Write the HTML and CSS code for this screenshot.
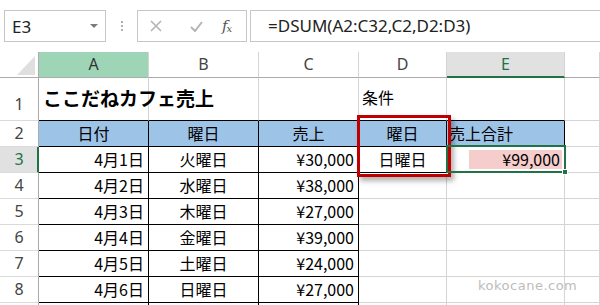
FILE: index.html
```html
<!DOCTYPE html>
<html lang="ja">
<head>
	<meta charset="UTF-8">
	<title>DSUM</title>
	<link rel="stylesheet" href="styles.css">
</head>
<body>
	<div class="bar">
		<div class="namebox">
			<span>E3</span>
			<span class="caret"></span>
		</div>
		<div class="dots"><i></i><i></i><i></i></div>
		<div class="fxbox">
			<svg width="12" height="12" viewBox="0 0 12 12"><path d="M1 1 L11 11 M11 1 L1 11" stroke="#b4b4b4" stroke-width="1.6" fill="none"/></svg>
			<svg width="13" height="11" viewBox="0 0 13 11"><path d="M1 6 L5 10 L12 1" stroke="#b4b4b4" stroke-width="2" fill="none"/></svg>
			<span class="fx">f<sub>x</sub></span>
		</div>
		<div class="formula">=DSUM(A2:C32,C2,D2:D3)</div>
	</div>

	<div class="sheet">
		<!-- 列見出し -->
		<div class="c corner"><span class="tri"></span></div>
		<div class="c h sel-a">A</div>
		<div class="c h">B</div>
		<div class="c h">C</div>
		<div class="c h">D</div>
		<div class="c h sel-e">E</div>
		<div class="c h"></div>

		<!-- 1行目 -->
		<div class="c rh rh1">1</div>
		<div class="c title bb">ここだねカフェ売上</div>
		<div class="c bb"></div>
		<div class="c bb"></div>
		<div class="c r1 bb">条件</div>
		<div class="c bb"></div>
		<div class="c"></div>

		<!-- 2行目 -->
		<div class="c rh">2</div>
		<div class="c blue bb br ctr">日付</div>
		<div class="c blue bb br ctr">曜日</div>
		<div class="c blue bb br ctr">売上</div>
		<div class="c blue bb br ctr">曜日</div>
		<div class="c blue bb br left">売上合計</div>
		<div class="c"></div>

		<!-- 3行目 -->
		<div class="c rh rh-sel">3</div>
		<div class="c bb br num">4月1日</div>
		<div class="c bb br ctr">火曜日</div>
		<div class="c bb br num">¥30,000</div>
		<div class="c bb br ctr">日曜日</div>
		<div class="c bb br num"><span class="pink">¥99,000</span></div>
		<div class="c"></div>

		<div class="c rh">4</div>
		<div class="c bb br num">4月2日</div>
		<div class="c bb br ctr">水曜日</div>
		<div class="c bb br num">¥38,000</div>
		<div class="c"></div><div class="c"></div><div class="c"></div>

		<div class="c rh">5</div>
		<div class="c bb br num">4月3日</div>
		<div class="c bb br ctr">木曜日</div>
		<div class="c bb br num">¥27,000</div>
		<div class="c"></div><div class="c"></div><div class="c"></div>

		<div class="c rh">6</div>
		<div class="c bb br num">4月4日</div>
		<div class="c bb br ctr">金曜日</div>
		<div class="c bb br num">¥39,000</div>
		<div class="c"></div><div class="c"></div><div class="c"></div>

		<div class="c rh">7</div>
		<div class="c bb br num">4月5日</div>
		<div class="c bb br ctr">土曜日</div>
		<div class="c bb br num">¥24,000</div>
		<div class="c"></div><div class="c"></div><div class="c"></div>

		<div class="c rh">8</div>
		<div class="c bb br num">4月6日</div>
		<div class="c bb br ctr">日曜日</div>
		<div class="c bb br num">¥27,000</div>
		<div class="c"></div><div class="c"></div><div class="c"></div>

		<!-- 9行目（上端だけ見える） -->
		<div class="c rh"></div>
		<div class="c bb br"></div>
		<div class="c bb br"></div>
		<div class="c bb br"></div>
		<div class="c"></div><div class="c"></div><div class="c"></div>

		<!-- 重ねて描くもの -->
		<div class="redbox"></div>
		<div class="selection"><span class="handle"></span></div>
		<div class="mark">kokocane.com</div>
	</div>
</body>
</html>
```

FILE: styles.css
```css
* {
	margin: 0;
	padding: 0;
	box-sizing: border-box;
}
body {
	width: 600px;
	height: 305px;
	overflow: hidden;
	background: #fff;
	font-family: "Noto Sans CJK JP", "Noto Sans", sans-serif;
	color: #000;
}

/* 数式バー */
.bar {
	height: 52px;
	display: flex;
	align-items: flex-start;
	padding: 10px 0 0 4px;
}
.namebox {
	width: 102px;
	height: 32px;
	border: 1px solid #c6c6c6;
	display: flex;
	align-items: center;
	justify-content: space-between;
	padding: 0 7px 0 7px;
	font: 17px "Noto Sans", sans-serif;
	color: #222;
}
.caret {
	width: 0;
	height: 0;
	border-left: 4px solid transparent;
	border-right: 4px solid transparent;
	border-top: 4px solid #7a7a7a;
}
.dots {
	width: 31px;
	height: 32px;
	display: flex;
	flex-direction: column;
	align-items: center;
	justify-content: center;
	gap: 2px;
}
.dots i {
	width: 2px;
	height: 2px;
	background: #b0b0b0;
}
.fxbox {
	width: 110px;
	height: 32px;
	border: 1px solid #c6c6c6;
	display: flex;
	align-items: center;
	padding-left: 12px;
	gap: 0;
}
.fxbox svg:first-child {
	margin-right: 28px;
}
.fxbox svg:nth-child(2) {
	margin-right: 19px;
}
.fx {
	font: italic 15px "DejaVu Serif", serif;
	color: #555;
	letter-spacing: -1px;
}
.fx sub {
	font-size: 10px;
	vertical-align: -1px;
}
.formula {
	flex: 1;
	margin-left: 3px;
	height: 32px;
	border: 1px solid #c6c6c6;
	border-right: none;
	padding-left: 17px;
	font: 17px/30px "Noto Sans", sans-serif;
	color: #222;
}

/* シート */
.sheet {
	position: relative;
	display: grid;
	grid-template-columns: 39px 110px 110px 100px 88px 118px 1fr;
	grid-template-rows: 26px 43px repeat(8, 26px);
	font-size: 16px;
}
.c {
	border-right: 1px solid #d4d4d4;
	border-bottom: 1px solid #d4d4d4;
	display: flex;
	align-items: center;
	white-space: nowrap;
	line-height: 1;
	padding-bottom: 1px;
}
.h {
	justify-content: center;
	border-bottom-color: #ababab;
	font: 16px "Noto Sans", sans-serif;
	color: #444;
}
.corner {
	position: relative;
	border-bottom-color: #ababab;
	border-right-color: #ababab;
}
.tri {
	position: absolute;
	right: 3px;
	bottom: 2px;
	width: 0;
	height: 0;
	border-left: 18px solid transparent;
	border-bottom: 19px solid #dfdfdf;
}
.sel-a {
	background: #9fd5b7;
	color: #333;
}
.sel-e {
	background: #e1e1e1;
	color: #217346;
	border-bottom: 2px solid #217346;
	padding-top: 1px;
}
.rh {
	justify-content: center;
	border-right-color: #ababab;
	border-bottom-color: #dadada;
	font: 16px "Noto Sans", sans-serif;
	color: #444;
}
.rh1 {
	align-items: flex-end;
	padding-bottom: 5px;
}
.rh-sel {
	background: #e1e1e1;
	color: #217346;
	border-right: 2px solid #217346;
	padding-left: 1px;
}
.title {
	font-size: 19px;
	font-weight: bold;
	padding-left: 4px;
	padding-bottom: 4px;
	overflow: visible;
}
.r1 {
	padding-left: 3px;
	padding-bottom: 4px;
}
.bb {
	border-bottom-color: #000;
}
.br {
	border-right-color: #000;
}
.blue {
	background: #9dc3e6;
}
.ctr {
	justify-content: center;
}
.left {
	padding-left: 2px;
}
.num {
	justify-content: flex-end;
	padding-right: 4px;
}
.pink {
	display: flex;
	align-items: center;
	justify-content: flex-end;
	width: 93px;
	height: 19px;
	background: #f6cdcd;
	margin-right: -2px;
	padding-right: 2px;
}

/* 赤枠・選択枠・透かし */
.redbox {
	position: absolute;
	left: 357px;
	top: 63px;
	width: 94px;
	height: 62px;
	border: 3px solid #c00000;
	box-shadow: 3px 4px 5px rgba(0, 0, 0, 0.3);
}
.selection {
	position: absolute;
	left: 446px;
	top: 93px;
	width: 120px;
	height: 28px;
	border: 2px solid #217346;
}
.handle {
	position: absolute;
	right: -4px;
	bottom: -4px;
	width: 6px;
	height: 6px;
	background: #217346;
	border: 1px solid #fff;
}
.mark {
	position: absolute;
	left: 478px;
	top: 226px;
	font: 13px "DejaVu Sans", sans-serif;
	letter-spacing: 0.5px;
	color: #bcbcbc;
	text-shadow: 0 0 1px #fff;
}
```
